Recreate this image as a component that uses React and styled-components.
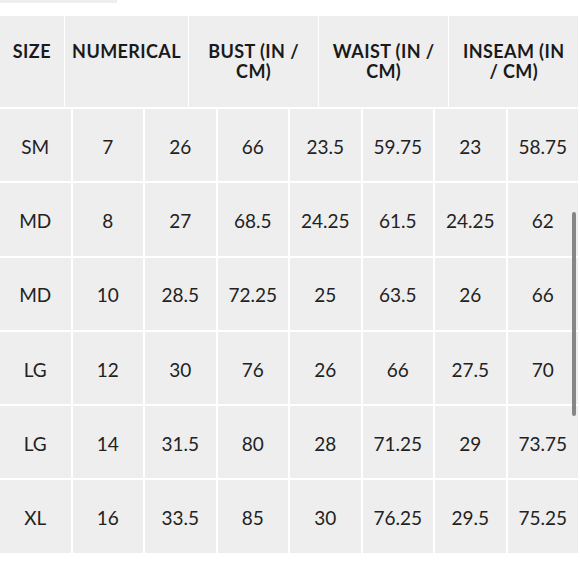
import React from "react";
import styled, { createGlobalStyle } from "styled-components";

const GlobalStyle = createGlobalStyle`
  html, body { margin: 0; padding: 0; background: #ffffff; }
  body { font-family: "Lato", "Liberation Sans", sans-serif; color: #1e1e1e; }
`;

const Page = styled.div`
  position: relative;
  width: 580px;
  height: 580px;
  overflow: hidden;
  background: #fff;
`;

const TopBar = styled.div`
  width: 117px;
  height: 3px;
  background: #eeeeee;
  margin-bottom: 13px;
`;

const Table = styled.div`
  width: 578px;
  display: flex;
  flex-direction: column;
  gap: 2px;
`;

const HeaderRow = styled.div`
  display: grid;
  grid-template-columns: 64fr 123fr 129fr 129fr 129fr;
  column-gap: 1.5px;
  height: 91px;
`;

const HeadCell = styled.div`
  background: #eeeeee;
  padding: 25px 4px 0;
  text-align: center;
  font-weight: 700;
  font-size: 18px;
  line-height: 20px;
  letter-spacing: 0.4px;
  color: #1a1a1a;
  white-space: nowrap;
`;

const BodyGrid = styled.div`
  display: grid;
  grid-template-columns: repeat(8, 1fr);
  grid-auto-rows: 72.3px;
  gap: 2px;
`;

const Cell = styled.div`
  background: #eeeeee;
  display: flex;
  align-items: center;
  justify-content: center;
  font-size: 19px;
  color: #222;
  padding-top: 2px;
`;

const Scrollbar = styled.div`
  position: absolute;
  left: 572px;
  top: 212px;
  width: 4px;
  height: 204px;
  border-radius: 2px;
  background: #868686;
`;

const headers = [
  ["SIZE"],
  ["NUMERICAL"],
  ["BUST (IN /", "CM)"],
  ["WAIST (IN /", "CM)"],
  ["INSEAM (IN", "/ CM)"],
];

const rows = [
  ["SM", "7", "26", "66", "23.5", "59.75", "23", "58.75"],
  ["MD", "8", "27", "68.5", "24.25", "61.5", "24.25", "62"],
  ["MD", "10", "28.5", "72.25", "25", "63.5", "26", "66"],
  ["LG", "12", "30", "76", "26", "66", "27.5", "70"],
  ["LG", "14", "31.5", "80", "28", "71.25", "29", "73.75"],
  ["XL", "16", "33.5", "85", "30", "76.25", "29.5", "75.25"],
];

export default function App() {
  return (
    <>
      <GlobalStyle />
      <Page>
        <TopBar />
        <Table>
          <HeaderRow>
            {headers.map((lines, i) => (
              <HeadCell key={i}>
                {lines.map((l, j) => (
                  <div key={j}>{l}</div>
                ))}
              </HeadCell>
            ))}
          </HeaderRow>
          <BodyGrid>
            {rows.map((r, ri) =>
              r.map((v, ci) => <Cell key={ri + "-" + ci}>{v}</Cell>)
            )}
          </BodyGrid>
        </Table>
        <Scrollbar />
      </Page>
    </>
  );
}
